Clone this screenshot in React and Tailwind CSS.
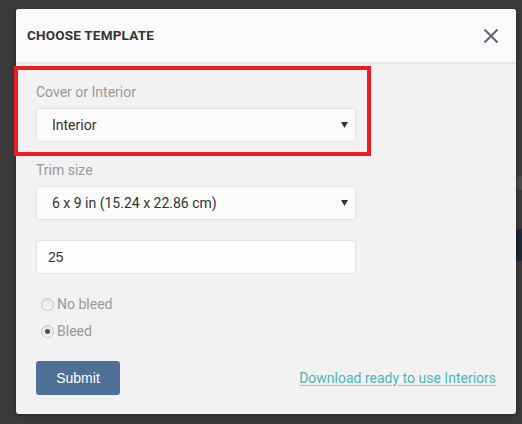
import React from "react";

function Arrow() {
  return (
    <svg width="7" height="6" viewBox="0 0 7 6" className="shrink-0">
      <path d="M0 0 H7 L3.5 6 Z" fill="#333" />
    </svg>
  );
}

function SelectBox({ value }) {
  return (
    <div className="w-[320px] h-[34px] flex items-center justify-between pl-[15px] pr-[7px] bg-[#fbfbfb] border border-[#e3e3e3] rounded-[3px] text-[14px] text-[#333]">
      <span>{value}</span>
      <Arrow />
    </div>
  );
}

function Radio({ checked, label }) {
  return (
    <div className="flex items-center h-[20px] pl-[5px]">
      <span className="w-[13px] h-[13px] rounded-full border border-[#c4c4c4] bg-gradient-to-b from-[#e6e6e6] to-[#f8f8f8] flex items-center justify-center shrink-0">
        {checked && <span className="w-[5px] h-[5px] rounded-full bg-[#505050]" />}
      </span>
      <span className="ml-[3px] text-[14px] text-[#999]">{label}</span>
    </div>
  );
}

export default function App() {
  return (
    <div
      className="relative w-[522px] h-[424px] bg-[#3a3a3a] overflow-hidden pt-[9px] pl-[16px]"
      style={{ fontFamily: "Roboto, 'Liberation Sans', sans-serif" }}
    >
      <div className="absolute right-0 top-[176px] w-[8px] h-[14px] rounded-l-full bg-[#4a4a4a]" />
      <div className="absolute right-0 top-[229px] w-[6px] h-[32px] bg-[#1d2833]" />
      <div className="relative w-[500px] h-[405px] rounded-[3px] bg-[#f2f2f2] shadow-[0_1px_4px_rgba(0,0,0,0.4)] flex flex-col overflow-hidden">
        <div className="h-[55px] bg-[#fafafa] border-b-2 border-[#e6e6e6] flex items-center justify-between pl-[11px] pr-[17px] shrink-0">
          <span className="text-[13.5px] font-bold text-[#333] tracking-[0.2px]">CHOOSE TEMPLATE</span>
          <svg width="16" height="16" viewBox="0 0 16 16">
            <path d="M1.5 1.5 L14.5 14.5 M14.5 1.5 L1.5 14.5" stroke="#5f6670" strokeWidth="2" />
          </svg>
        </div>
        <div className="flex flex-col pl-[20px] pr-[20px] pt-[18px]">
          <div className="h-[20px] leading-[20px] text-[14px] text-[#999]">Cover or Interior</div>
          <div className="mt-[6px]">
            <SelectBox value="Interior" />
          </div>
          <div className="mt-[18px] h-[20px] leading-[20px] text-[14px] text-[#999]">Trim size</div>
          <div className="mt-[6px]">
            <SelectBox value="6 x 9 in (15.24 x 22.86 cm)" />
          </div>
          <div className="mt-[20px] w-[320px] h-[34px] flex items-center pl-[11px] bg-[#fdfdfd] border border-[#e3e3e3] rounded-[3px] text-[14px] text-[#333]" style={{ fontFamily: "'Liberation Sans', Arial, sans-serif" }}>
            25
          </div>
          <div className="mt-[20px]">
            <Radio label="No bleed" />
          </div>
          <div className="mt-[7px]">
            <Radio checked label="Bleed" />
          </div>
          <div className="mt-[20px] flex items-center justify-between">
            <button
              className="w-[84px] h-[34px] rounded-[3px] bg-[#4f7096] text-white text-[14px]"
              style={{ fontFamily: "'Liberation Sans', Arial, sans-serif" }}
            >
              Submit
            </button>
            <a className="text-[14px] text-[#4fb5b6] underline decoration-[#8fd0d0] underline-offset-2 cursor-pointer">
              Download ready to use Interiors
            </a>
          </div>
        </div>
      </div>
      <div className="absolute left-[14px] top-[66px] w-[357px] h-[90px] border-4 border-[#ec1c24]" />
    </div>
  );
}
